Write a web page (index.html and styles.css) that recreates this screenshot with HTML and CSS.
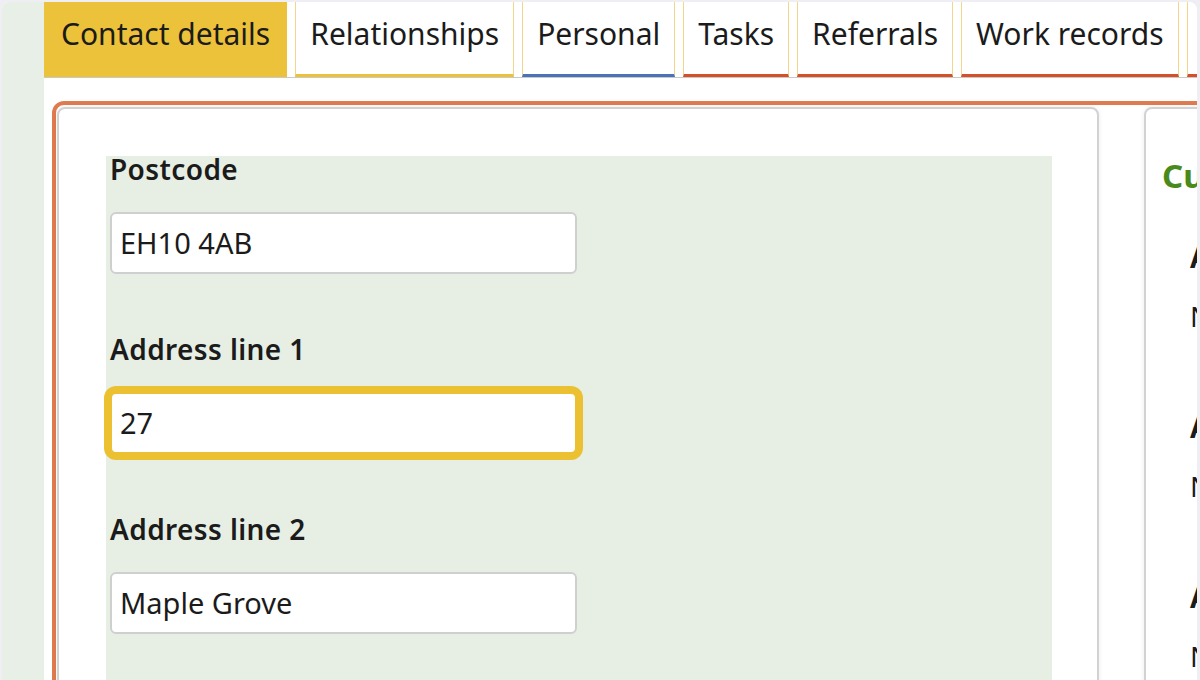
FILE: index.html
```html
<!DOCTYPE html>
<html lang="en">
<head>
<meta charset="utf-8">
<title>Contact details</title>
<link rel="stylesheet" href="styles.css">
</head>
<body>
<div class="window">
  <div class="sidebar"></div>
  <div class="main">
    <nav class="tabs">
      <div class="tab active">Contact details</div>
      <div class="tab t-yellow">Relationships</div>
      <div class="tab t-blue">Personal</div>
      <div class="tab t-red">Tasks</div>
      <div class="tab t-red">Referrals</div>
      <div class="tab t-red">Work records</div>
      <div class="tab t-red">Documents</div>
    </nav>
    <div class="content">
      <div class="frame">
        <section class="card form-card">
          <div class="form-area">
            <div class="field">
              <label class="label">Postcode</label>
              <div class="input">EH10 4AB</div>
            </div>
            <div class="field">
              <label class="label">Address line 1</label>
              <div class="input focused">27</div>
            </div>
            <div class="field">
              <label class="label">Address line 2</label>
              <div class="input">Maple Grove</div>
            </div>
          </div>
        </section>
        <section class="card side-card">
          <h2 class="side-title">Current address</h2>
          <div class="side-group">
            <div class="side-key">Address line 1</div>
            <div class="side-val">Not recorded</div>
          </div>
          <div class="side-group">
            <div class="side-key">Address line 2</div>
            <div class="side-val">Not recorded</div>
          </div>
          <div class="side-group">
            <div class="side-key">Address line 3</div>
            <div class="side-val">Not recorded</div>
          </div>
        </section>
      </div>
    </div>
  </div>
</div>
</body>
</html>
```

FILE: styles.css
```css
html, body {
  margin: 0;
  padding: 0;
}
body {
  background: #eeeef3;
  width: 1200px;
  height: 680px;
  overflow: hidden;
  padding: 2px 3px 0 2px;
  box-sizing: border-box;
  font-family: "Noto Sans", "DejaVu Sans", sans-serif;
  color: #1b1b1b;
}
.window {
  display: flex;
  height: 678px;
  background: #ffffff;
  border-radius: 8px 8px 0 0;
  overflow: hidden;
}
.sidebar {
  width: 42px;
  flex: none;
  background: #e8efe6;
}
.main {
  flex: 1;
  min-width: 0;
  overflow: hidden;
}
.tabs {
  display: flex;
  gap: 8px;
  height: 75px;
  border-bottom: 1px solid #c9c9c9;
  white-space: nowrap;
}
.tab {
  flex: none;
  box-sizing: border-box;
  height: 75px;
  padding: 12px 14px 0 14px;
  font-size: 30px;
  line-height: 40px;
  border-left: 1px solid #f3d58c;
  border-right: 1px solid #f3d58c;
  border-bottom: 3px solid #ecc23a;
  background: #ffffff;
}
.tab.active {
  background: #ecc23a;
  border-color: #ecc23a;
  border-bottom: none;
  padding-left: 16px;
  padding-right: 16px;
}
.tab.t-yellow { border-bottom-color: #ecc23a; }
.tab.t-blue { border-bottom-color: #4a72b9; }
.tab.t-red { border-bottom-color: #d4502a; }

.content {
  padding: 23px 0 0 8px;
}
.frame {
  display: flex;
  gap: 45px;
  width: 1300px;
  height: 640px;
  padding: 2px 1px 0 1px;
  border: 4px solid #e07b50;
  border-radius: 12px;
  box-sizing: border-box;
}
.card {
  flex: none;
  box-sizing: border-box;
  border: 2px solid #d2d2d2;
  border-radius: 8px;
  box-shadow: 0 0 5px rgba(0, 0, 0, 0.08);
  background: #ffffff;
}
.form-card {
  width: 1042px;
  padding: 47px 45px 0 47px;
}
.form-area {
  background: #e7efe4;
  height: 560px;
  padding: 0 4px;
}
.field {
  padding-bottom: 62px;
}
.label {
  display: block;
  font-size: 28px;
  line-height: 27px;
  font-weight: 600;
  letter-spacing: 0.4px;
  margin-bottom: 29px;
}
.input {
  box-sizing: border-box;
  width: 467px;
  height: 62px;
  border: 2px solid #cfcfcf;
  border-radius: 6px;
  background: #ffffff;
  padding: 0 8px;
  font-size: 29px;
  line-height: 58px;
}
.input.focused {
  border-color: #ecc131;
  box-shadow: 0 0 0 6px #ecc131;
  border-radius: 6px;
}
.side-card {
  width: 300px;
  padding: 47px 16px 0 16px;
}
.side-title {
  margin: 0 0 45px 0;
  font-size: 33px;
  line-height: 40px;
  font-weight: 700;
  color: #4a8a1a;
}
.side-group {
  padding-left: 28px;
  margin-bottom: 79px;
}
.side-key {
  font-size: 28px;
  line-height: 32px;
  font-weight: 700;
  margin-bottom: 27px;
}
.side-val {
  font-size: 28px;
  line-height: 32px;
}
```
